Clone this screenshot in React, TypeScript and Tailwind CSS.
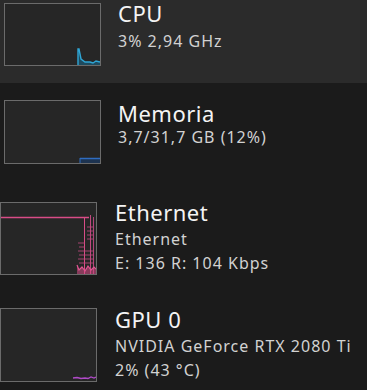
import React from "react";

const font = { fontFamily: '"Noto Sans", "Open Sans", sans-serif' };

function GraphBox({ className, children }: { className: string; children?: React.ReactNode }) {
  return (
    <div className={`shrink-0 border border-[#6b6b6b] bg-[#262626] ${className}`}>
      {children}
    </div>
  );
}

function CpuGraph() {
  return (
    <svg width="95" height="61" viewBox="0 0 95 61" className="block">
      <path d="M73 61 L73 45 L74 45 L76 55 L80 58 L85 58 L88 59 L91 57 L95 58 L95 61 Z" fill="#1b5b78" opacity="0.7" />
      <polyline points="73,61 73,45 74,45 76,55 80,58 85,58 88,59 91,57 95,58" fill="none" stroke="#2fa6d6" strokeWidth="1.4" />
    </svg>
  );
}

function MemGraph() {
  return (
    <svg width="95" height="62" viewBox="0 0 95 62" className="block">
      <rect x="75" y="57" width="20" height="5" fill="#1d3350" />
      <line x1="75" y1="57.5" x2="95" y2="57.5" stroke="#2f6cc0" strokeWidth="1.5" />
      <line x1="75" y1="57" x2="75" y2="62" stroke="#2f6cc0" strokeWidth="1" />
    </svg>
  );
}

function EthGraph() {
  return (
    <svg width="95" height="71" viewBox="0 0 95 71" className="block">
      <line x1="0" y1="14.5" x2="88" y2="14.5" stroke="#d94c87" strokeWidth="1.5" />
      <line x1="83.5" y1="14" x2="83.5" y2="71" stroke="#d94c87" strokeWidth="1" />
      <line x1="89.5" y1="12" x2="89.5" y2="71" stroke="#c04a7e" strokeWidth="1" />
      <line x1="92.5" y1="14" x2="92.5" y2="71" stroke="#b0457a" strokeWidth="1" />
      <g stroke="#c24a80" strokeWidth="1" opacity="0.8">
        <line x1="77" y1="40" x2="84" y2="40" />
        <line x1="78" y1="44" x2="84" y2="44" />
        <line x1="77" y1="48" x2="93" y2="48" />
        <line x1="78" y1="52" x2="93" y2="52" />
        <line x1="77" y1="56" x2="93" y2="56" />
        <line x1="78" y1="60" x2="93" y2="60" />
        <line x1="86" y1="32" x2="92" y2="32" />
        <line x1="86" y1="36" x2="92" y2="36" />
        <line x1="86" y1="24" x2="92" y2="24" />
        <line x1="86" y1="28" x2="92" y2="28" />
      </g>
      <path d="M76 71 L76 62 L78 67 L81 64 L84 68 L87 63 L90 67 L93 64 L95 66 L95 71 Z" fill="#d94c87" opacity="0.55" />
      <polyline points="76,62 78,67 81,64 84,68 87,63 90,67 93,64 95,66" fill="none" stroke="#e05592" strokeWidth="1.2" />
    </svg>
  );
}

function GpuGraph() {
  return (
    <svg width="95" height="72" viewBox="0 0 95 72" className="block">
      <polyline points="72,69 76,68.5 80,69.5 84,69 87,69.5 90,68 93,69 95,68" fill="none" stroke="#b04ac8" strokeWidth="1.3" />
    </svg>
  );
}

const title = "text-[22px] leading-[26px] tracking-[0.5px] text-[#f4f4f4]";
const sub = "text-[16px] leading-[22px] tracking-[1px] text-[#d2d2d2]";

export default function App() {
  return (
    <div className="w-[367px] h-[390px] overflow-hidden bg-[#1b1b1b]" style={font}>
      {/* CPU - selected */}
      <div className="flex h-[83px] bg-[#2b2b2b] pl-[4px]">
        <GraphBox className="w-[97px] h-[63px] mt-[3px]">
          <CpuGraph />
        </GraphBox>
        <div className="ml-[17px] flex flex-col">
          <div className={title}>CPU</div>
          <div className={`${sub} mt-[4px]`}>3% 2,94 GHz</div>
        </div>
      </div>

      {/* Memory */}
      <div className="flex h-[102px] pl-[4px] pt-[17px]">
        <GraphBox className="w-[97px] h-[64px]">
          <MemGraph />
        </GraphBox>
        <div className="ml-[17px] flex flex-col">
          <div className={title}>Memoria</div>
          <div className={sub}>3,7/31,7 GB (12%)</div>
        </div>
      </div>

      {/* Ethernet */}
      <div className="flex h-[106px] pt-[17px]">
        <GraphBox className="w-[97px] h-[73px]">
          <EthGraph />
        </GraphBox>
        <div className="ml-[18px] flex flex-col">
          <div className={`${title} -mt-[3px]`}>Ethernet</div>
          <div className={`${sub} mt-[3px]`}>Ethernet</div>
          <div className={`${sub} mt-[2px]`}>E: 136 R: 104 Kbps</div>
        </div>
      </div>

      {/* GPU */}
      <div className="flex pt-[17px]">
        <GraphBox className="w-[97px] h-[74px]">
          <GpuGraph />
        </GraphBox>
        <div className="ml-[18px] flex flex-col">
          <div className={`${title} -mt-[2px]`}>GPU 0</div>
          <div className={`${sub} mt-[3px]`}>NVIDIA GeForce RTX 2080 Ti</div>
          <div className={`${sub} mt-[2px]`}>2% (43 °C)</div>
        </div>
      </div>
    </div>
  );
}
